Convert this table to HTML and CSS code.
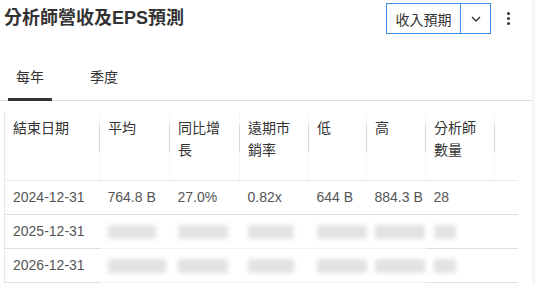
FILE: index.html
```html
<!DOCTYPE html>
<html lang="zh-Hant">
<head>
<meta charset="utf-8">
<link rel="stylesheet" href="styles.css">
</head>
<body>
<div class="card">
  <div class="head">
    <h2 class="title">分析師營收及EPS預測</h2>
    <div class="actions">
      <div class="split">
        <button class="split-main">收入預期</button>
        <button class="split-arrow"><svg width="10" height="6" viewBox="0 0 10 6"><path d="M1 1l4 4 4-4" fill="none" stroke="#333" stroke-width="1.3"/></svg></button>
      </div>
      <button class="kebab"><span></span><span></span><span></span></button>
    </div>
  </div>
  <div class="tabs">
    <div class="tab active">每年</div>
    <div class="tab">季度</div>
  </div>
  <div class="table-wrap">
    <table class="grid">
      <colgroup>
        <col class="c1"><col class="c2"><col class="c3"><col class="c4"><col class="c5"><col class="c6"><col class="c7"><col class="c8">
      </colgroup>
      <thead>
        <tr>
          <th>結束日期</th><th>平均</th><th>同比增<br>長</th><th>遠期市<br>銷率</th><th>低</th><th>高</th><th>分析師<br>數量</th><th class="blank"></th>
        </tr>
      </thead>
      <tbody>
        <tr>
          <td>2024-12-31</td><td>764.8 B</td><td>27.0%</td><td>0.82x</td><td>644 B</td><td>884.3 B</td><td>28</td><td></td>
        </tr>
        <tr class="blurred">
          <td>2025-12-31</td><td><span class="blur w48"></span></td><td><span class="blur w50"></span></td><td><span class="blur w46"></span></td><td><span class="blur w50"></span></td><td><span class="blur w50"></span></td><td><span class="blur w22"></span></td><td></td>
        </tr>
        <tr class="blurred">
          <td>2026-12-31</td><td><span class="blur w58"></span></td><td><span class="blur w50"></span></td><td><span class="blur w46"></span></td><td><span class="blur w50"></span></td><td><span class="blur w50"></span></td><td><span class="blur w22"></span></td><td></td>
        </tr>
      </tbody>
    </table>
  </div>
</div>
</body>
</html>
```

FILE: styles.css
```css
* { box-sizing: border-box; }
html, body {
  margin: 0;
  padding: 0;
  background: #fff;
}
body {
  font-family: "Liberation Sans", "Noto Sans CJK TC", Arial, sans-serif;
  color: #333;
  width: 535px;
  height: 284px;
  overflow: hidden;
}
.card {
  border-right: 3px solid #f6f6f6;
  height: 284px;
}
.head {
  display: flex;
  justify-content: space-between;
  align-items: center;
  height: 37px;
  padding: 3px 0 0 4px;
}
.title {
  margin: 0;
  font-size: 18px;
  font-weight: bold;
  color: #333;
  line-height: 22px;
  margin-top: -4px;
}
.actions {
  display: flex;
  align-items: center;
  margin-top: -3px;
}
.split {
  display: flex;
  border: 1px solid #3f8ee6;
  height: 31px;
}
.split button {
  background: #fff;
  border: 0;
  font-family: inherit;
  color: #333;
  padding: 0;
  cursor: pointer;
}
.split .split-main {
  width: 74px;
  font-size: 14px;
  border-right: 1px solid #3f8ee6;
}
.split-arrow {
  width: 29px;
  display: flex;
  align-items: center;
  justify-content: center;
}
.kebab {
  width: 34px;
  height: 31px;
  border: 0;
  background: none;
  display: flex;
  flex-direction: column;
  align-items: center;
  justify-content: center;
  gap: 2px;
  padding: 0;
  margin-right: 7px;
}
.kebab span {
  width: 3px;
  height: 3px;
  border-radius: 50%;
  background: #333;
}
.tabs {
  display: flex;
  gap: 30px;
  padding-left: 8px;
  margin-top: 18px;
  height: 46px;
  border-bottom: 1px solid #dddddd;
}
.tab {
  font-size: 14px;
  padding: 0 8px;
  line-height: 44px;
  height: 46px;
  color: #333;
}
.tab.active {
  box-shadow: inset 0 -3px 0 #333;
}
.table-wrap {
  margin-top: 10px;
  padding-left: 4px;
}
.grid {
  border-collapse: collapse;
  table-layout: fixed;
  width: 513px;
  border-left: 1px solid #e6e6e6;
  font-size: 14px;
}
col.c1 { width: 95px; }
col.c2 { width: 70px; }
col.c3 { width: 70px; }
col.c4 { width: 69px; }
col.c5 { width: 58px; }
col.c6 { width: 59px; }
col.c7 { width: 69px; }
col.c8 { width: 23px; }
.grid th {
  position: relative;
  text-align: left;
  vertical-align: top;
  font-weight: normal;
  color: #333;
  line-height: 22px;
  height: 69px;
  padding: 6px 8px 0 8px;
  border-right: 1px solid #f5f5f5;
  border-bottom: 1px solid #ececec;
}
.grid th::after {
  content: "";
  position: absolute;
  right: -1px;
  top: 14px;
  height: 27px;
  width: 1px;
  background: #d6d6d6;
}
.grid th.blank::after { display: none; }
.grid th.blank { border-right: 0; }
.grid td {
  height: 34px;
  padding: 0 8px;
  color: #555;
  white-space: nowrap;
  border-bottom: 1px solid #e0e0e0;
}
.blur {
  display: inline-block;
  height: 14px;
  vertical-align: middle;
  background: #dcdcdc;
  filter: blur(2px);
  opacity: 0.8;
}
.w22 { width: 22px; }
.w46 { width: 46px; }
.w48 { width: 48px; }
.w50 { width: 50px; }
.w58 { width: 58px; }
.blurred td:not(:first-child):not(:last-child):not(:nth-child(7)) {
  border-bottom-color: #f4f4f4;
}
```
